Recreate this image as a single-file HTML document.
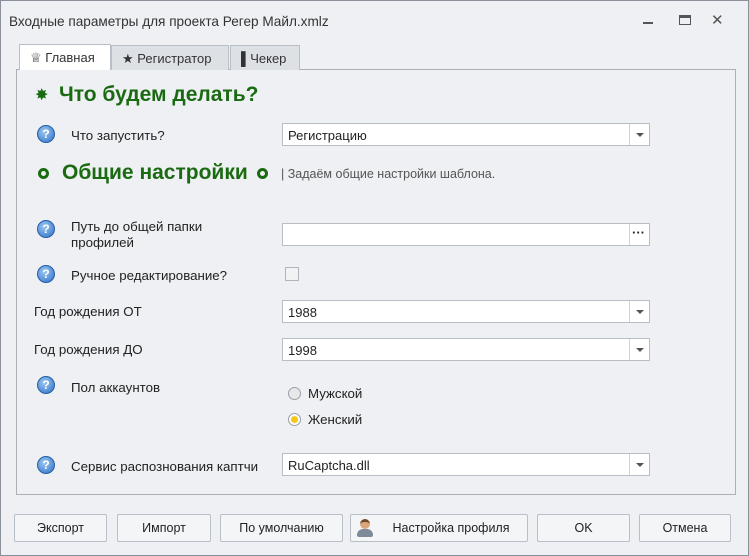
<!DOCTYPE html>
<html><head><meta charset="utf-8"><style>
*{box-sizing:border-box;margin:0;padding:0}
body{width:749px;height:556px;background:#eef0f3;font-family:"Liberation Sans","DejaVu Sans",sans-serif;font-size:12px;color:#222;position:relative;overflow:hidden;border:1px solid #8a9099}
.a{position:absolute}
.title{left:8px;top:13px;font-size:13.6px;color:#333}
.panel{left:15px;top:68px;width:720px;height:426px;border:1px solid #a9b0b8;background:#eef0f3}
.tab{top:44px;height:25px;border:1px solid #b9bfc6;border-bottom:none;background:#dde1e6;font-size:13px;padding:5px 0 0 10px;color:#333}
.field{left:281px;width:368px;height:23px;background:#fff;border:1px solid #b8bec6;padding:4px 5px;font-size:13px}
.dd{position:absolute;right:0;top:0;width:20px;height:21px;border-left:1px solid #d0d4d9}
.dd.ar:after{content:"";position:absolute;left:6px;top:9px;border:4px solid transparent;border-top:4px solid #555}
.q{width:18px;height:18px;border-radius:50%;background:radial-gradient(circle at 40% 35%,#9cc7f2,#2f6fc4);border:1px solid #245ea8;color:#fff;font-weight:bold;font-size:12px;text-align:center;line-height:16px}
.lbl{font-size:13.3px;color:#222}
.btn{top:513px;height:28px;border:1px solid #b9bfc6;background:#f4f5f7;border-radius:2px;text-align:center;line-height:26px;font-size:12.5px;color:#222}
.h{font-size:21px;font-weight:bold;color:#1a6a12}
.ring{width:11px;height:11px;border-radius:50%;border:3px solid #1a6a12}
.radio{width:13px;height:13px;border-radius:50%;border:1px solid #9aa0a8;background:#e8e8e8}
</style></head><body>
<div class="a title">Входные параметры для проекта Регер Майл.xmlz</div>
<div class="a" style="left:642px;top:21px;width:10px;height:2px;background:#555"></div>
<div class="a" style="left:678px;top:14px;width:12px;height:10px;border:1px solid #555;border-top:3px solid #555"></div>
<div class="a" style="left:710px;top:10px;font-size:15px;color:#555">✕</div>
<div class="a panel"></div>
<div class="a tab" style="left:110px;width:118px">★ Регистратор</div>
<div class="a tab" style="left:229px;width:70px">▌Чекер</div>
<div class="a tab" style="left:18px;width:92px;background:#fff;height:26px;top:43px">♕ Главная</div>
<div class="a" style="left:34px;top:84px;color:#1a6a12;font-size:16px">✸</div>
<div class="a h" style="left:58px;top:82px">Что будем делать?</div>
<div class="a q" style="left:36px;top:124px">?</div>
<div class="a lbl" style="left:70px;top:127px">Что запустить?</div>
<div class="a field" style="top:122px">Регистрацию<div class="dd ar"></div></div>
<div class="a ring" style="left:37px;top:167px"></div>
<div class="a h" style="left:61px;top:160px">Общие настройки</div>
<div class="a ring" style="left:256px;top:167px"></div>
<div class="a" style="left:280px;top:166px;color:#555;font-size:12.5px">| Задаём общие настройки шаблона.</div>
<div class="a q" style="left:36px;top:219px">?</div>
<div class="a lbl" style="left:70px;top:218px;line-height:16px">Путь до общей папки<br>профилей</div>
<div class="a field" style="top:222px"><div class="dd"></div><div style="position:absolute;right:4px;top:1px;font-weight:bold">···</div></div>
<div class="a q" style="left:36px;top:264px">?</div>
<div class="a lbl" style="left:70px;top:267px">Ручное редактирование?</div>
<div class="a" style="left:284px;top:266px;width:14px;height:14px;border:1px solid #b0b5bb;background:#f1f2f4"></div>
<div class="a lbl" style="left:33px;top:303px">Год рождения ОТ</div>
<div class="a field" style="top:299px">1988<div class="dd ar"></div></div>
<div class="a lbl" style="left:33px;top:341px">Год рождения ДО</div>
<div class="a field" style="top:337px">1998<div class="dd ar"></div></div>
<div class="a q" style="left:36px;top:375px">?</div>
<div class="a lbl" style="left:70px;top:379px">Пол аккаунтов</div>
<div class="a radio" style="left:287px;top:386px"></div>
<div class="a lbl" style="left:307px;top:385px">Мужской</div>
<div class="a radio" style="left:287px;top:412px;background:radial-gradient(circle,#f5c518 0 3px,#fff 4px)"></div>
<div class="a lbl" style="left:307px;top:411px">Женский</div>
<div class="a q" style="left:36px;top:455px">?</div>
<div class="a lbl" style="left:70px;top:458px">Сервис распознования каптчи</div>
<div class="a field" style="top:452px">RuCaptcha.dll<div class="dd ar"></div></div>
<div class="a btn" style="left:13px;width:93px">Экспорт</div>
<div class="a btn" style="left:116px;width:94px">Импорт</div>
<div class="a btn" style="left:219px;width:123px">По умолчанию</div>
<div class="a btn" style="left:349px;width:178px;padding-left:24px">Настройка профиля
<div class="a" style="left:9px;top:4px;width:10px;height:10px;border-radius:50%;background:#d9a77a;border-top:3px solid #6b4a2b"></div>
<div class="a" style="left:6px;top:14px;width:16px;height:8px;border-radius:6px 6px 2px 2px;background:#7e8a97"></div></div>
<div class="a btn" style="left:536px;width:93px">OK</div>
<div class="a btn" style="left:638px;width:92px">Отмена</div>
</body></html>
